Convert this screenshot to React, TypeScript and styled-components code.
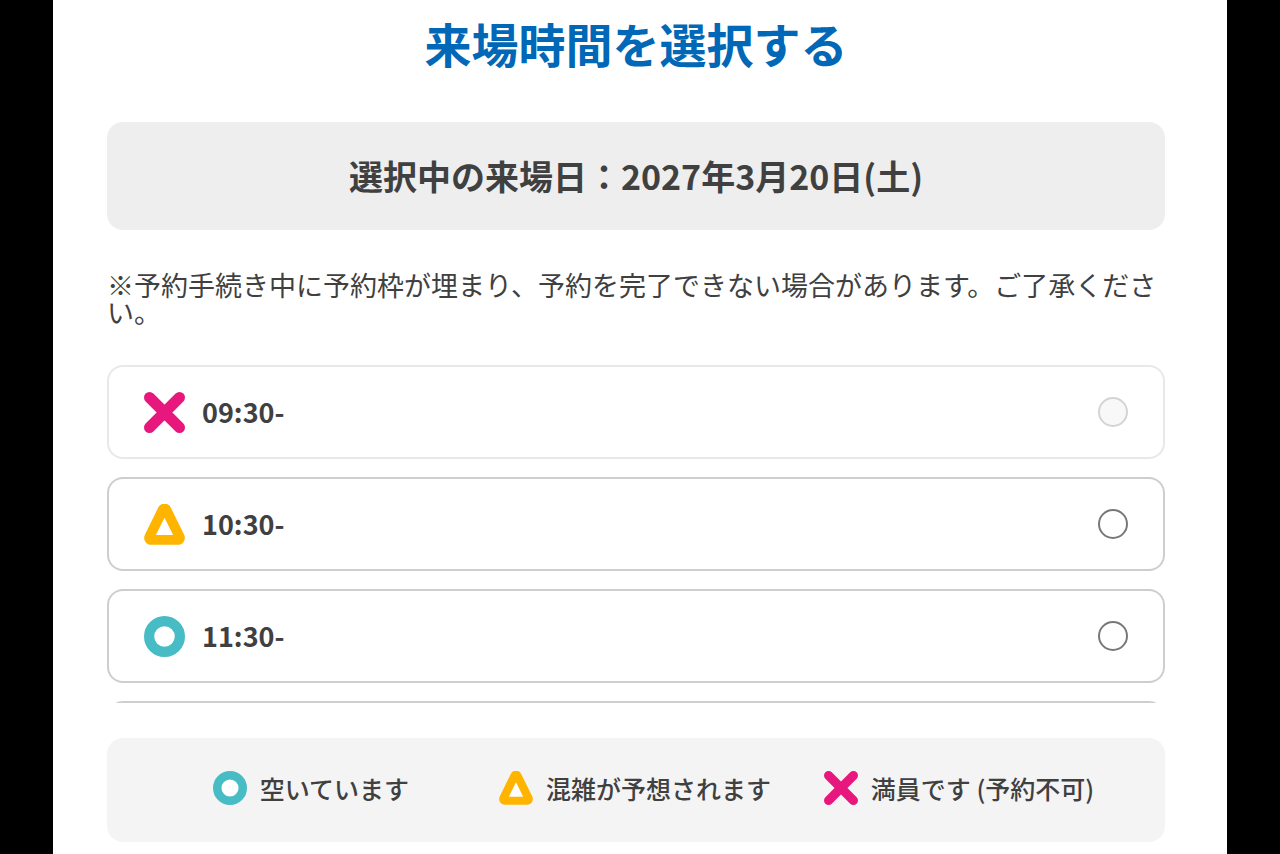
import React from "react";
import styled, { createGlobalStyle } from "styled-components";

const GlobalStyle = createGlobalStyle`
  *, *::before, *::after { box-sizing: border-box; }
  body {
    margin: 0;
    background: #000;
    color: #404040;
    font-family: "Noto Sans CJK JP", "Noto Sans", sans-serif;
  }
`;

const Page = styled.main`
  display: flex;
  flex-direction: column;
  min-height: 100vh;
  margin: 0 53px;
  padding: 8px 62px 12px 54px;
  background: #fff;
`;

const Title = styled.h1`
  margin: 0 0 44px;
  color: #0068b7;
  font-size: 47px;
  font-weight: 700;
  line-height: 70px;
  text-align: center;
`;

const SelectedDate = styled.p`
  margin: 0 0 41px;
  padding: 30px 24px;
  border-radius: 16px;
  background: #eee;
  font-size: 34px;
  font-weight: 700;
  line-height: 48px;
  text-align: center;
`;

const Note = styled.p`
  margin: 0 0 40px;
  font-size: 27px;
  line-height: 27px;
`;

const SlotList = styled.ul`
  display: flex;
  flex-direction: column;
  gap: 18px;
  height: 338px;
  margin: 0 0 35px;
  padding: 0;
  overflow-y: auto;
  scrollbar-width: none;
  list-style: none;
`;

const SlotItem = styled.li<{ $disabled?: boolean }>`
  flex: none;
  min-height: 94px;
  border: 2px solid ${(p) => (p.$disabled ? "#e8e8e8" : "#cecece")};
  border-radius: 16px;
`;

const SlotLabel = styled.label`
  display: flex;
  align-items: center;
  gap: 17px;
  min-height: 90px;
  padding: 0 35px;
  font-size: 27px;
  font-weight: 700;
  line-height: 40px;
`;

const SlotTime = styled.span`
  flex: 1;
`;

const Radio = styled.input`
  appearance: none;
  width: 30px;
  height: 30px;
  margin: 0;
  border: 2px solid #787878;
  border-radius: 50%;
  background: #fff;

  &:checked {
    box-shadow: inset 0 0 0 6px #fff;
    background: #0068b7;
  }

  &:disabled {
    border-color: #d4d4d4;
    background: #f8f8f8;
  }
`;

const Legend = styled.ul`
  display: grid;
  grid-template-columns: repeat(3, 1fr);
  margin: 0;
  padding: 30px 44px 34px 42px;
  border-radius: 16px;
  background: #f4f4f4;
  list-style: none;
`;

const LegendItem = styled.li`
  display: flex;
  align-items: center;
  justify-content: center;
  gap: 13px;
  font-size: 25px;
  font-weight: 500;
  line-height: 40px;
  white-space: nowrap;
`;

const Mark = styled.svg`
  display: block;
  flex: none;
`;

type Status = "open" | "busy" | "full";

const statusText: Record<Status, string> = {
  open: "空いています",
  busy: "混雑が予想されます",
  full: "満員です (予約不可)",
};

function StatusMark({ status, size }: { status: Status; size: number }) {
  return (
    <Mark width={size} height={size} viewBox="0 0 41 41" aria-hidden="true">
      {status === "open" && (
        <circle cx="20.5" cy="20.5" r="15.4" fill="#fff" stroke="#48bcc4" strokeWidth="10.2" />
      )}
      {status === "busy" && (
        <>
          <path
            d="M14.2 3.6A7 7 0 0 1 26.8 3.6L40.1 30.7A7 7 0 0 1 33.8 40.8H7.2A7 7 0 0 1 .9 30.7Z"
            fill="#ffb400"
          />
          <path d="M20.5 13.7L29.1 31H11.9Z" fill="#fff" />
        </>
      )}
      {status === "full" && (
        <path
          d="M5.5 5.5L35.5 35.5M35.5 5.5L5.5 35.5"
          fill="none"
          stroke="#e8177d"
          strokeWidth="11"
          strokeLinecap="round"
        />
      )}
    </Mark>
  );
}

const slots: { time: string; status: Status }[] = [
  { time: "09:30-", status: "full" },
  { time: "10:30-", status: "busy" },
  { time: "11:30-", status: "open" },
];

const legend: Status[] = ["open", "busy", "full"];

export default function App() {
  return (
    <>
      <GlobalStyle />
      <Page lang="ja">
        <Title>来場時間を選択する</Title>
        <SelectedDate>選択中の来場日：2027年3月20日(土)</SelectedDate>
        <Note>
          ※予約手続き中に予約枠が埋まり、予約を完了できない場合があります。ご了承ください。
        </Note>
        <SlotList>
          {slots.map(({ time, status }) => (
            <SlotItem key={time} $disabled={status === "full"}>
              <SlotLabel>
                <StatusMark status={status} size={41} />
                <SlotTime>{time}</SlotTime>
                <Radio type="radio" name="slot" value={time} disabled={status === "full"} />
              </SlotLabel>
            </SlotItem>
          ))}
          <SlotItem />
        </SlotList>
        <Legend>
          {legend.map((status) => (
            <LegendItem key={status}>
              <StatusMark status={status} size={34} />
              {statusText[status]}
            </LegendItem>
          ))}
        </Legend>
      </Page>
    </>
  );
}
